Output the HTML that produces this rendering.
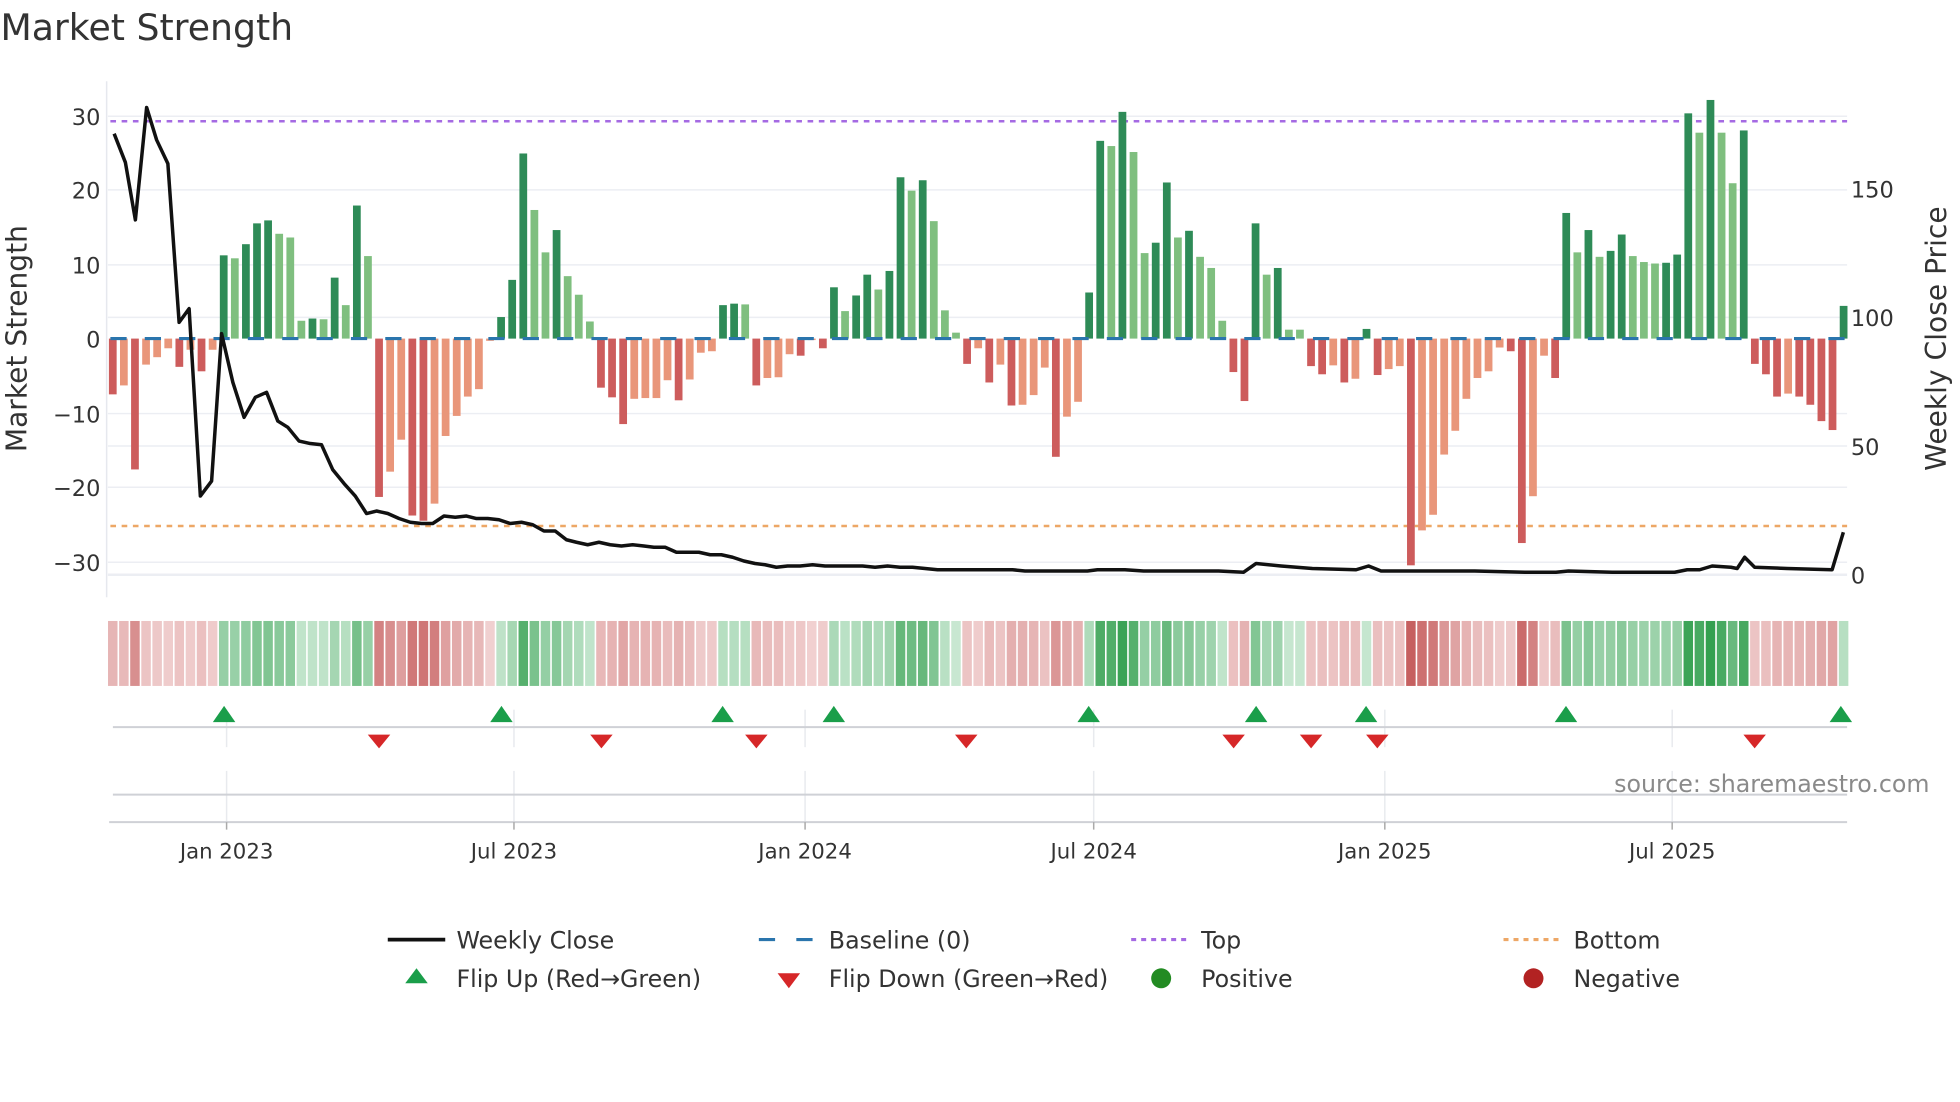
<!DOCTYPE html>
<html><head><meta charset="utf-8">
<style>
html,body{margin:0;padding:0;background:#fff;}
svg{display:block;font-family:"DejaVu Sans","Liberation Sans",sans-serif;}
</style></head>
<body>
<svg id="s" width="1960" height="1102" viewBox="0 0 1568 882" xmlns="http://www.w3.org/2000/svg">
<rect width="1568" height="882" fill="#fff"/>
<text x="0" y="32" font-size="29" fill="#333">Market Strength</text>
<line x1="85" y1="65" x2="85" y2="478" stroke="#e6e8ee" stroke-width="1.2"/>
<g stroke="#eceef3" stroke-width="1.2">
<line x1="86" y1="93" x2="1478" y2="93"/><line x1="86" y1="152" x2="1478" y2="152"/>
<line x1="86" y1="212" x2="1478" y2="212"/><line x1="86" y1="331" x2="1478" y2="331"/>
<line x1="86" y1="390" x2="1478" y2="390"/><line x1="86" y1="450" x2="1478" y2="450"/>
<line x1="86" y1="254" x2="1478" y2="254"/><line x1="86" y1="357" x2="1478" y2="357"/>
<line x1="86" y1="460" x2="1478" y2="460" stroke-width="2"/>
</g>
<g font-size="18" fill="#333" text-anchor="end">
<text x="80" y="100">30</text><text x="80" y="159">20</text><text x="80" y="219">10</text>
<text x="80" y="278">0</text><text x="80" y="338">−10</text><text x="80" y="397">−20</text><text x="80" y="457">−30</text>
</g>
<g font-size="18" fill="#333">
<text x="1481" y="158">150</text><text x="1481" y="261">100</text><text x="1481" y="364">50</text><text x="1481" y="467">0</text>
</g>
<text transform="translate(21,271) rotate(-90)" font-size="22.5" fill="#333" text-anchor="middle">Market Strength</text>
<text transform="translate(1557,271) rotate(-90)" font-size="22.5" fill="#333" text-anchor="middle">Weekly Close Price</text>
<line x1="88" y1="97" x2="1478" y2="97" stroke="#a56ae3" stroke-width="2" stroke-dasharray="4.5 4.5"/>
<line x1="88" y1="421" x2="1478" y2="421" stroke="#eda766" stroke-width="2" stroke-dasharray="4.5 4.5"/>
<g id="bars"></g>
<line x1="88" y1="271" x2="1478" y2="271" stroke="#2a75ad" stroke-width="2.5" stroke-dasharray="13 14.5"/>
<polyline fill="none" stroke="#111" stroke-width="2.8" stroke-linejoin="round" points="91,107 100,130 108,176 117,86 125,112 134,131 143,258 151,247 160,397 169,385 177,267 186,306 195,334 204,318 213,314 222,337 230,342 239,353 248,355 257,356 266,376 275,387 284,397 293,411 301,409 310,411 319,415 328,418 337,419 346,419 355,413 364,414 373,413 381,415 390,415 399,416 408,419 417,418 426,420 435,425 444,425 453,432 461,434 470,436 479,434 488,436 497,437 506,436 515,437 523,438 532,438 541,442 550,442 559,442 568,444 577,444 586,446 595,449 604,451 612,452 621,454 630,453 640,453 650,452 660,453 670,453 680,453 690,453 700,454 710,453 720,454 730,454 740,455 750,456 770,456 790,456 810,456 820,457 840,457 860,457 870,457 878,456 900,456 915,457 940,457 960,457 975,457 995,458 1005,451 1025,453 1050,455 1085,456 1095,453 1105,457 1130,457 1180,457 1220,458 1245,458 1255,457 1290,458 1340,458 1350,456 1360,456 1370,453 1385,454 1390,455 1396,446 1404,454 1430,455 1466,456 1475,426"/>
<g id="heat"></g>
<g stroke="#e8eaee" stroke-width="1.2">
<line x1="181" y1="568" x2="181" y2="598"/><line x1="411" y1="568" x2="411" y2="598"/><line x1="644" y1="568" x2="644" y2="598"/><line x1="875" y1="568" x2="875" y2="598"/><line x1="1108" y1="568" x2="1108" y2="598"/><line x1="1338" y1="568" x2="1338" y2="598"/>
<line x1="181" y1="617" x2="181" y2="658"/><line x1="411" y1="617" x2="411" y2="658"/><line x1="644" y1="617" x2="644" y2="658"/><line x1="875" y1="617" x2="875" y2="658"/><line x1="1108" y1="617" x2="1108" y2="658"/><line x1="1338" y1="617" x2="1338" y2="658"/>
</g>
<line x1="90" y1="582" x2="1478" y2="582" stroke="#cfd1d6" stroke-width="1.6"/>
<line x1="90" y1="636" x2="1478" y2="636" stroke="#cfd1d6" stroke-width="1.6"/>
<line x1="87" y1="658" x2="1478" y2="658" stroke="#cfd1d6" stroke-width="1.6"/>
<g stroke="#aaa" stroke-width="1.2">
<line x1="181" y1="658" x2="181" y2="664"/><line x1="411" y1="658" x2="411" y2="664"/><line x1="644" y1="658" x2="644" y2="664"/><line x1="875" y1="658" x2="875" y2="664"/><line x1="1108" y1="658" x2="1108" y2="664"/><line x1="1338" y1="658" x2="1338" y2="664"/>
</g>
<g id="flips"></g>
<text x="1544" y="634" font-size="19" fill="#8a8a8a" text-anchor="end">source: sharemaestro.com</text>
<g font-size="17" fill="#333" text-anchor="middle">
<text x="181" y="687">Jan 2023</text><text x="411" y="687">Jul 2023</text><text x="644" y="687">Jan 2024</text>
<text x="875" y="687">Jul 2024</text><text x="1108" y="687">Jan 2025</text><text x="1338" y="687">Jul 2025</text>
</g>
<line x1="310" y1="752" x2="356" y2="752" stroke="#111" stroke-width="3"/>
<line x1="607" y1="752" x2="650" y2="752" stroke="#2a75ad" stroke-width="2.5" stroke-dasharray="13 17"/>
<line x1="905" y1="752" x2="950" y2="752" stroke="#a56ae3" stroke-width="2.5" stroke-dasharray="4 4"/>
<line x1="1203" y1="752" x2="1248" y2="752" stroke="#eda766" stroke-width="2.5" stroke-dasharray="4 4"/>
<polygon points="333,775 342,787 324,787" fill="#1a9e4a"/>
<polygon points="622,779 640,779 631,791" fill="#d62728"/>
<circle cx="929" cy="783" r="8" fill="#228b22"/>
<circle cx="1227" cy="783" r="8" fill="#b22222"/>
<g font-size="19" fill="#333">
<text x="365" y="759">Weekly Close</text><text x="663" y="759">Baseline (0)</text><text x="961" y="759">Top</text><text x="1259" y="759">Bottom</text>
<text x="365" y="790">Flip Up (Red→Green)</text><text x="663" y="790">Flip Down (Green→Red)</text><text x="961" y="790">Positive</text><text x="1259" y="790">Negative</text>
</g>
</svg>
<script>
var D=[[-7.5,1],[-6.3,0],[-17.6,1],[-3.5,0],[-2.5,0],[-1.3,0],[-3.8,1],[-1.5,0],[-4.4,1],[-1.5,0],
[11.2,1],[10.8,0],[12.7,1],[15.5,1],[15.9,1],[14.1,0],[13.6,0],[2.4,0],[2.7,1],[2.6,0],[8.2,1],[4.5,0],[17.9,1],[11.1,0],
[-21.3,1],[-17.9,0],[-13.6,0],[-23.8,1],[-24.5,1],[-22.2,0],[-13.1,0],[-10.4,0],[-7.8,0],[-6.8,0],[-0.3,0],
[2.9,1],[7.9,1],[24.9,1],[17.3,0],[11.6,0],
[14.6,1],[8.4,0],[5.9,0],[2.3,0],
[-6.6,1],[-7.9,1],[-11.5,1],[-8.1,0],[-8.0,0],[-8.0,0],[-5.6,0],[-8.3,1],[-5.5,0],[-1.9,0],[-1.7,0],
[4.5,1],[4.7,1],[4.6,0],
[-6.3,1],[-5.3,0],[-5.2,0],[-2.1,0],[-2.3,1],[-0.2,0],[-1.3,1],
[6.9,1],[3.7,0],[5.8,1],[8.6,1],[6.6,0],[9.1,1],[21.7,1],[19.9,0],[21.3,1],[15.8,0],[3.8,0],[0.8,0],
[-3.4,1],[-1.3,0],[-5.9,1],
[-3.5,0],[-9.0,1],[-8.9,0],[-7.6,0],[-3.9,0],[-15.9,1],[-10.5,0],[-8.5,0],
[6.2,1],[26.6,1],[25.9,0],[30.5,1],[25.1,0],[11.5,0],[12.9,1],[21.0,1],[13.6,0],[14.5,1],[11.0,0],[9.5,0],[2.4,0],
[-4.5,1],[-8.4,1],
[15.5,1],[8.6,0],[9.5,1],[1.2,0],[1.2,0],
[-3.7,1],[-4.8,1],[-3.6,0],[-5.9,1],[-5.4,0],
[1.3,1],
[-4.9,1],[-4.1,0],[-3.7,0],[-30.5,1],[-25.8,0],
[-23.7,0],[-15.6,0],[-12.4,0],[-8.1,0],[-5.3,0],[-4.4,0],[-1.2,0],[-1.7,1],[-27.5,1],[-21.2,0],[-2.3,0],[-5.3,1],
[16.9,1],[11.6,0],[14.6,1],[11.0,0],[11.8,1],[14.0,1],[11.1,0],[10.3,0],[10.1,0],[10.2,1],[11.3,1],[30.3,1],[27.7,0],[32.1,1],[27.7,0],[20.9,0],[28.0,1],
[-3.4,1],[-4.8,1],[-7.8,1],[-7.4,0],[-7.8,1],[-8.9,1],[-11.1,1],[-12.3,1],
[4.4,1]];
var NS="http://www.w3.org/2000/svg";
function el(p,t,a){var e=document.createElementNS(NS,t);for(var k in a)e.setAttribute(k,a[k]);p.appendChild(e);return e;}
var bars=document.getElementById('bars'),heat=document.getElementById('heat');
var x0=89.9,pitch=(1475.2-89.9)/(D.length-1),zero=271,sc=5.95;
function mix(a,b,t){return 'rgb('+[0,1,2].map(function(i){return Math.round(a[i]+(b[i]-a[i])*t)}).join(',')+')';}
D.forEach(function(d,i){
 var v=d[0],x=x0+i*pitch,h=Math.abs(v)*sc,y=v>=0?zero-h:zero;
 var c=v>=0?(d[1]?'#2e8b57':'#7fbf7f'):(d[1]?'#cd5c5c':'#e9967a');
 el(bars,'rect',{x:(x-3.1).toFixed(2),y:y.toFixed(2),width:6.2,height:Math.max(h,0.5).toFixed(2),fill:c});
 var t=Math.min(Math.abs(v)/32,1);t=0.12+0.88*t;
 var col=v>=0?mix([224,243,230],[52,160,80],t):mix([247,225,225],[196,90,90],t);
 el(heat,'rect',{x:(x-3.8).toFixed(2),y:497,width:7.6,height:52,fill:col});
});
var fl=document.getElementById('flips');
[179,401,578,667,871,1005,1093,1253,1473].forEach(function(x){el(fl,'polygon',{points:(x)+',565 '+(x+9)+',578 '+(x-9)+',578',fill:'#1a9e4a'});});
[303,481,605,773,987,1049,1102,1404].forEach(function(x){el(fl,'polygon',{points:(x-9)+',588 '+(x+9)+',588 '+x+',599',fill:'#d62728'});});
</script>
</body></html>
